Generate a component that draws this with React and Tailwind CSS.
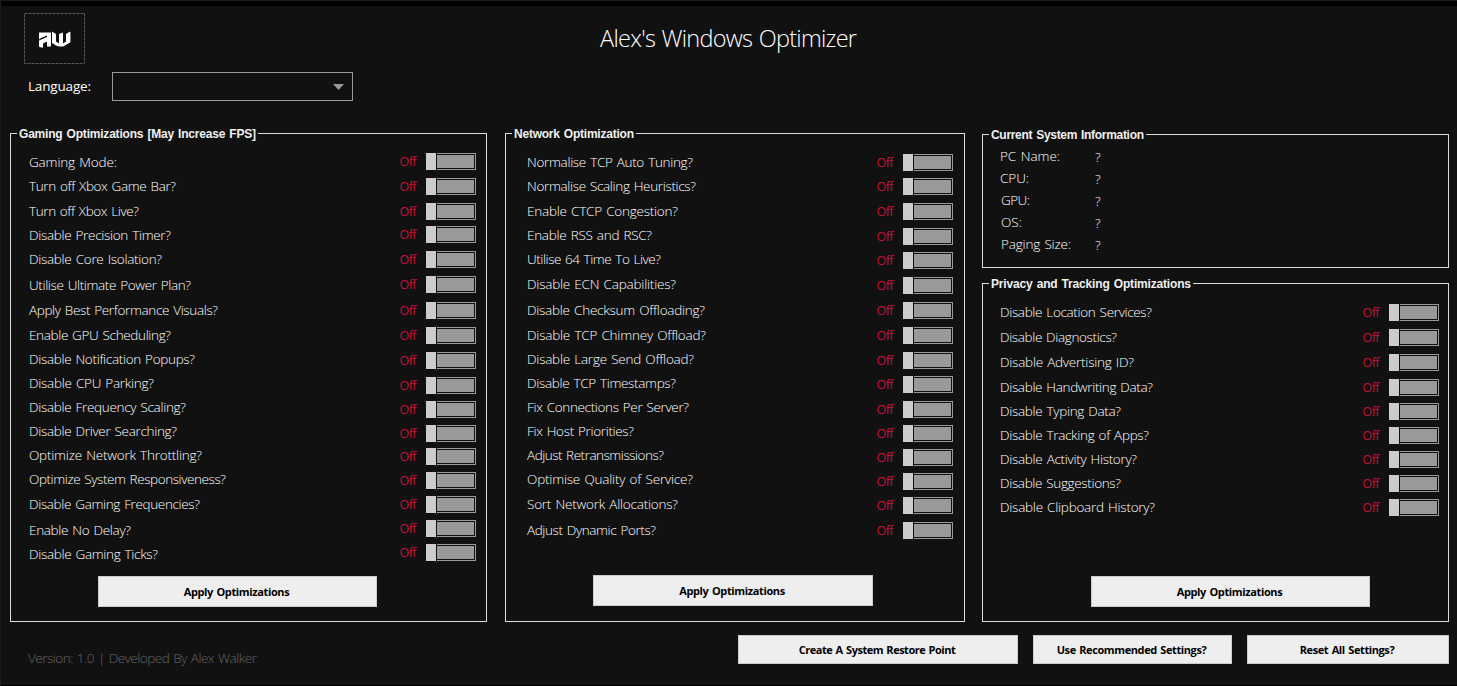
import { useLayoutEffect, useRef, useState } from "react";

// Text set to a known width by evening out its letter spacing.
function Fit({ width, children, className = "" }) {
  const ref = useRef(null);
  const [spacing, setSpacing] = useState(0);
  useLayoutEffect(() => {
    const natural = ref.current.getBoundingClientRect().width;
    setSpacing((width - natural) / (children.length - 1));
  }, []);
  return (
    <span ref={ref} className={`inline-block whitespace-nowrap ${className}`} style={{ letterSpacing: spacing }}>
      {children}
    </span>
  );
}

// Each entry: label, label width, label centre y, switch top y.
const GAMING = [
  ["Gaming Mode:", 88, 162, 153],
  ["Turn off Xbox Game Bar?", 147, 186, 178],
  ["Turn off Xbox Live?", 110, 211, 203],
  ["Disable Precision Timer?", 142, 235, 226],
  ["Disable Core Isolation?", 133, 259, 251],
  ["Utilise Ultimate Power Plan?", 162, 285, 276],
  ["Apply Best Performance Visuals?", 189, 310, 302],
  ["Enable GPU Scheduling?", 142, 335, 327],
  ["Disable Notification Popups?", 166, 359, 352],
  ["Disable CPU Parking?", 125, 383, 377],
  ["Disable Frequency Scaling?", 157, 407, 401],
  ["Disable Driver Searching?", 148, 431, 425],
  ["Optimize Network Throttling?", 173, 455, 448],
  ["Optimize System Responsiveness?", 197, 479, 472],
  ["Disable Gaming Frequencies?", 171, 504, 496],
  ["Enable No Delay?", 102, 530, 520],
  ["Disable Gaming Ticks?", 129, 554, 544],
];

const NETWORK = [
  ["Normalise TCP Auto Tuning?", 166, 162, 154],
  ["Normalise Scaling Heuristics?", 169, 186, 178],
  ["Enable CTCP Congestion?", 151, 211, 203],
  ["Enable RSS and RSC?", 125, 235, 228],
  ["Utilise 64 Time To Live?", 134, 259, 252],
  ["Disable ECN Capabilities?", 149, 284, 277],
  ["Disable Checksum Offloading?", 178, 310, 302],
  ["Disable TCP Chimney Offload?", 179, 335, 327],
  ["Disable Large Send Offload?", 167, 359, 352],
  ["Disable TCP Timestamps?", 149, 383, 376],
  ["Fix Connections Per Server?", 162, 407, 401],
  ["Fix Host Priorities?", 107, 431, 425],
  ["Adjust Retransmissions?", 137, 455, 449],
  ["Optimise Quality of Service?", 166, 479, 473],
  ["Sort Network Allocations?", 151, 504, 497],
  ["Adjust Dynamic Ports?", 129, 530, 522],
];

const PRIVACY = [
  ["Disable Location Services?", 152, 312, 304],
  ["Disable Diagnostics?", 117, 337, 329],
  ["Disable Advertising ID?", 134, 362, 354],
  ["Disable Handwriting Data?", 153, 387, 379],
  ["Disable Typing Data?", 121, 411, 403],
  ["Disable Tracking of Apps?", 149, 435, 427],
  ["Disable Activity History?", 137, 459, 451],
  ["Disable Suggestions?", 121, 483, 475],
  ["Disable Clipboard History?", 155, 507, 499],
];

const SYSTEM = [
  ["PC Name:", 60, ""],
  ["CPU:", 29, ""],
  ["GPU:", 29, "pl-px"],
  ["OS:", 21, "pl-px"],
  ["Paging Size:", 70, "pl-px"],
];

function Panel({ title, titleWidth, className, children }) {
  return (
    <section className={`relative flex flex-col border border-[#dcdcdc] ${className}`}>
      <h2 className="absolute -top-[8px] left-[6px] bg-[#111] px-[2px] text-[12px] font-bold leading-4 text-[#f0f0f0] [word-spacing:1px] font-['Liberation_Sans',sans-serif]">
        <Fit width={titleWidth}>{title}</Fit>
      </h2>
      {children}
    </section>
  );
}

function Toggle() {
  return (
    <div className="flex items-start">
      <span className="mr-[10px] text-[12.5px] leading-[17px] text-[#c8103c] font-normal">
        <Fit width={17}>Off</Fit>
      </span>
      <button aria-label="toggle" className="flex h-[17px] w-[50px]">
        <span className="mr-px h-full w-[10px] bg-[#ccc]" />
        <span className="flex h-full flex-1 border-y border-r border-[#999] py-px pr-px">
          <span className="flex-1 bg-[#999]" />
        </span>
      </button>
    </div>
  );
}

const gapTo = (rows, i, key, last) => (i + 1 < rows.length ? rows[i + 1][key] - rows[i][key] : last);

function Options({ rows, className }) {
  return (
    <div className={`flex items-start justify-between ${className}`}>
      <ul className="flex flex-col">
        {rows.map((r, i) => (
          <li key={r[0]} className="leading-4" style={{ height: gapTo(rows, i, 2, 16) }}>
            <Fit width={r[1]}>{r[0]}</Fit>
          </li>
        ))}
      </ul>
      <div className="flex flex-col" style={{ marginTop: rows[0][3] - rows[0][2] + 8 }}>
        {rows.map((r, i) => (
          <div key={r[0]} style={{ height: gapTo(rows, i, 3, 17) }}>
            <Toggle />
          </div>
        ))}
      </div>
    </div>
  );
}

function Button({ width, className, children }) {
  return (
    <button className={`flex items-center justify-center border border-[#ccc] bg-[#eee] pr-[2px] pt-[2px] text-[11px] font-bold text-black [word-spacing:1px] ${className}`}>
      <Fit width={width}>{children}</Fit>
    </button>
  );
}

function Logo() {
  return (
    <svg width="61" height="51" viewBox="0 0 61 51" fill="none">
      <rect x="0.5" y="0.5" width="60" height="50" stroke="#5a5a5a" strokeDasharray="3 1" />
      <path
        d="M15 19.5 H27 V33.5 H23 V28.5 L19 30.5 V34.5 H17 L15 33.5 V27.5 L23 24 V22.5 L17 25 L15 26.5 Z"
        fill="#fff"
      />
      <path
        d="M28 18.5 L32 21 V28.5 L35 30.5 V21 L39 19.5 V30.5 L42 28.5 V21 L46 18.5 V29.5 L41 32.5 L39 33.5 H35 L32 32.5 L28 30 Z"
        fill="#fff"
      />
      <path d="M46.5 19 V29.5" stroke="#777" />
    </svg>
  );
}

export default function App() {
  return (
    <main className="flex h-[686px] w-[1457px] flex-col overflow-hidden border-l border-t border-b border-l-[#1c1c1c] border-t-[#1c1c1c] border-b-black bg-[#111] text-[13.5px] font-light text-white [word-spacing:1px] font-['Open_Sans',sans-serif]">
      <div className="h-[5px] shrink-0 bg-black" />

      <header className="flex h-[127px] shrink-0 pl-[23px] pt-[7px]">
        <div className="flex w-[329px] flex-col">
          <Logo />
          <div className="mt-2 flex items-center pl-1">
            <label className="w-[84px] pb-[2px] font-normal leading-4">
              <Fit width={63}>Language:</Fit>
            </label>
            <div className="flex h-[29px] w-[241px] items-center justify-end border border-[#999] pr-2">
              <svg width="11" height="6" viewBox="0 0 11 6">
                <path d="M0 0H11L5.5 6Z" fill="#999" />
              </svg>
            </div>
          </div>
        </div>
        <h1 className="ml-[247px] mt-[9px] text-[23.5px] leading-8">
          <Fit width={257}>Alex's Windows Optimizer</Fit>
        </h1>
      </header>

      <div className="flex h-[489px] shrink-0 pl-[9px]">
        <Panel title="Gaming Optimizations [May Increase FPS]" titleWidth={237} className="w-[477px]">
          <Options rows={GAMING} className="h-[442px] pl-[18px] pr-[10px] pt-5" />
          <Button width={106} className="ml-[87px] h-[31px] w-[279px]">Apply Optimizations</Button>
        </Panel>

        <Panel title="Network Optimization" titleWidth={120} className="ml-[18px] w-[460px]">
          <Options rows={NETWORK} className="h-[441px] pl-[21px] pr-[11px] pt-5" />
          <Button width={106} className="ml-[87px] h-[31px] w-[280px]">Apply Optimizations</Button>
        </Panel>

        <div className="ml-[17px] flex w-[467px] flex-col pt-px">
          <Panel title="Current System Information" titleWidth={153} className="h-[134px]">
            <ul className="flex flex-col pl-[17px] pt-[11px]">
              {SYSTEM.map(([name, w, pad]) => (
                <li key={name} className="flex h-[22px] leading-[22px]">
                  <span className={`w-[95px] -mt-px ${pad}`}>
                    <Fit width={w}>{name}</Fit>
                  </span>
                  <span>?</span>
                </li>
              ))}
            </ul>
          </Panel>
          <Panel title="Privacy and Tracking Optimizations" titleWidth={200} className="mt-[15px] h-[339px]">
            <Options rows={PRIVACY} className="h-[292px] pl-[17px] pr-[9px] pt-5" />
            <Button width={106} className="ml-[108px] h-[31px] w-[279px]">Apply Optimizations</Button>
          </Panel>
        </div>
      </div>

      <footer className="flex shrink-0 items-start pl-[27px] pt-[13px]">
        <div className="w-[710px] pt-[15px] leading-4 text-[#666]">
          <Fit width={229}>Version: 1.0 | Developed By Alex Walker</Fit>
        </div>
        <Button width={157} className="h-[29px] w-[280px]">Create A System Restore Point</Button>
        <Button width={150} className="ml-[15px] h-[29px] w-[199px]">Use Recommended Settings?</Button>
        <Button width={95} className="ml-[15px] h-[29px] w-[202px]">Reset All Settings?</Button>
      </footer>
    </main>
  );
}
